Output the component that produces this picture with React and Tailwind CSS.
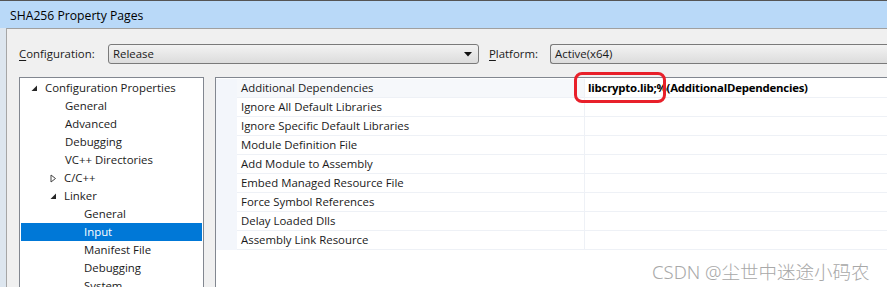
import React from "react";

const font = { fontFamily: '"Open Sans", "Noto Sans", sans-serif' };

function Expanded() {
  return (
    <svg width="7" height="7" viewBox="0 0 7 7" className="shrink-0">
      <polygon points="6,0.5 6,6 0.5,6" fill="#262626" />
    </svg>
  );
}
function Collapsed() {
  return (
    <svg width="7" height="9" viewBox="0 0 7 9" className="shrink-0">
      <polygon points="1,1 5.5,4.5 1,8" fill="none" stroke="#454545" strokeWidth="1" />
    </svg>
  );
}

const treeItems = [
  { label: "Configuration Properties", indent: 0, icon: "exp" },
  { label: "General", indent: 2 },
  { label: "Advanced", indent: 2 },
  { label: "Debugging", indent: 2 },
  { label: "VC++ Directories", indent: 2 },
  { label: "C/C++", indent: 1, icon: "col" },
  { label: "Linker", indent: 1, icon: "exp" },
  { label: "General", indent: 3 },
  { label: "Input", indent: 3, selected: true },
  { label: "Manifest File", indent: 3 },
  { label: "Debugging", indent: 3 },
  { label: "System", indent: 3 },
];

const props = [
  "Additional Dependencies",
  "Ignore All Default Libraries",
  "Ignore Specific Default Libraries",
  "Module Definition File",
  "Add Module to Assembly",
  "Embed Managed Resource File",
  "Force Symbol References",
  "Delay Loaded Dlls",
  "Assembly Link Resource",
];

const indentPad = ["pl-[10px]", "pl-[29px]", "pl-[44px]", "pl-[63px]"];

export default function App() {
  return (
    <div className="relative w-[887px] h-[287px] overflow-hidden text-[11.4px] text-[#1a1a1a] bg-[#f0f0f0] flex flex-col" style={font}>
      {/* title bar */}
      <div className="h-[28px] shrink-0 bg-[#b9d9f8] border-t border-[#555] flex items-center pl-[10px] pt-[3px] text-[12.2px] text-black">
        SHA256 Property Pages
      </div>
      <div className="flex flex-1 min-h-0">
        <div className="w-[7px] shrink-0 bg-[#dde6ef] border-r border-[#a6a6a6]" />
        <div className="flex-1 flex flex-col bg-[#f0f0f0] border-t border-[#a0a0a0] min-w-0">
          {/* config row */}
          <div className="flex items-center h-[20px] mt-[15px] pl-[12px]">
            <div className="w-[89px]"><span className="underline underline-offset-2">C</span>onfiguration:</div>
            <div className="w-[371px] h-[20px] rounded-[3px] border border-[#7a7a7a] bg-gradient-to-b from-[#f3f3f3] to-[#dcdcdc] flex items-center pl-[4px] pr-[6px]">
              <span className="flex-1">Release</span>
              <svg width="8" height="5" viewBox="0 0 8 5"><polygon points="0,0 8,0 4,4.5" fill="#111" /></svg>
            </div>
            <div className="ml-[10px] w-[61px]"><span className="underline underline-offset-2">P</span>latform:</div>
            <div className="flex-1 h-[20px] rounded-l-[3px] border border-r-0 border-[#7a7a7a] bg-gradient-to-b from-[#f3f3f3] to-[#dcdcdc] flex items-center pl-[4px]">
              Active(x64)
            </div>
          </div>
          {/* panels */}
          <div className="flex flex-1 mt-[13px] pl-[12px] gap-[11px] min-h-0">
            <div className="w-[185px] shrink-0 bg-white border border-[#828790] border-b-0 pt-[1px] px-[1px] overflow-hidden">
              {treeItems.map((it, i) => (
                <div
                  key={i}
                  className={`h-[18px] flex items-center gap-[7px] ${indentPad[it.indent]} ${it.selected ? "bg-[#0078d7] text-white" : ""}`}
                >
                  {it.icon === "exp" && <Expanded />}
                  {it.icon === "col" && <Collapsed />}
                  <span className="whitespace-nowrap">{it.label}</span>
                </div>
              ))}
            </div>
            <div className="flex-1 bg-white border-l border-t border-[#828790] min-w-0 flex flex-col pt-[1px]">
              {props.map((p, i) => (
                <div key={i} className="flex h-[19px] shrink-0">
                  <div className="w-[21px] shrink-0 bg-[#f3f6fb]" />
                  <div className={`w-[347px] shrink-0 pl-[4px] flex items-center border-b border-[#eef1f6] whitespace-nowrap ${i === 0 ? "bg-[#f6f8fb]" : ""}`}>
                    {p}
                  </div>
                  <div className="flex-1 border-l border-b border-[#eef1f6] pl-[3px] flex items-center font-bold tracking-[-0.22px] whitespace-nowrap text-black">
                    {i === 0 ? "libcrypto.lib;%(AdditionalDependencies)" : ""}
                  </div>
                </div>
              ))}
            </div>
          </div>
        </div>
      </div>
      {/* annotation */}
      <div className="absolute left-[574px] top-[72px] w-[92px] h-[31px] border-[3px] border-[#e8202a] rounded-[8px]" />
      {/* watermark */}
      <div
        className="absolute left-[652px] top-[258px] text-[18.5px] text-[#a8a8a8] font-light whitespace-nowrap"
        style={{ fontFamily: '"Noto Sans", "Noto Sans CJK SC", sans-serif' }}
      >
        CSDN @尘世中迷途小码农
      </div>
    </div>
  );
}
